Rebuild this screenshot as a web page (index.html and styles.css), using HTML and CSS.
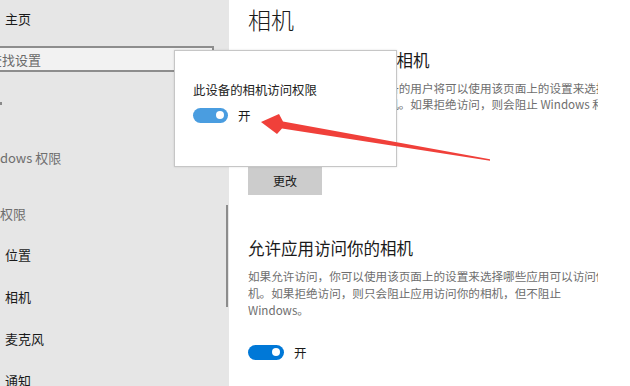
FILE: index.html
```html
<!DOCTYPE html>
<html lang="zh-CN">
<head>
    <meta charset="UTF-8">
    <title>相机</title>
    <link rel="stylesheet" href="styles.css">
</head>
<body>
    <div class="sidebar">
        <div class="home">主页</div>
        <div class="search"><span class="search-text">查找设置</span></div>
        <div class="nav-item"><span class="mark"></span></div>
        <div class="nav-head"><span class="cut-win">Windows 权限</span></div>
        <div class="nav-head app-head"><span class="cut-app">应用权限</span></div>
        <div class="nav-item">位置</div>
        <div class="nav-item">相机</div>
        <div class="nav-item">麦克风</div>
        <div class="nav-item">通知</div>
        <div class="thumb"></div>
    </div>

    <div class="main">
        <h1>相机</h1>
        <h2 class="first">允许访问此设备上的相机</h2>
        <p class="desc">如果允许访问，则使用此设备的用户将可以使用该页面上的设置来选择是否允许应用访问你的相机<br>择哪些应用可以访问你的相机。如果拒绝访问，则会阻止 Windows 和应用访问你的相机。</p>
        <p class="status">此设备的相机访问已开启</p>
        <button class="change">更改</button>

        <h2 class="second">允许应用访问你的相机</h2>
        <p class="desc desc2">如果允许访问，你可以使用该页面上的设置来选择哪些应用可以访问你的相<br>机。如果拒绝访问，则只会阻止应用访问你的相机，但不阻止<br>Windows。</p>
        <div class="toggle-row">
            <span class="toggle"><span class="knob"></span></span>
            <span class="on">开</span>
        </div>
    </div>

    <div class="popup">
        <div class="popup-title">此设备的相机访问权限</div>
        <div class="toggle-row popup-row">
            <span class="toggle light"><span class="knob"></span></span>
            <span class="on">开</span>
        </div>
    </div>

    <svg class="arrow" width="630" height="386" viewBox="0 0 630 386">
        <polygon points="261,122 279,114 283,121.5 490,159.3 490,160.7 282,128.5 277,134" fill="#f0403a"/>
    </svg>
</body>
</html>
```

FILE: styles.css
```css
body{
    margin: 0;
    width: 630px;
    height: 386px;
    overflow: hidden;
    display: flex;
    position: relative;
    font-family: "Noto Sans CJK SC", "Noto Sans", sans-serif;
    color: #1a1a1a;
}
.sidebar{
    width: 229px;
    flex-shrink: 0;
    background-color: #e6e6e6;
    position: relative;
    overflow: hidden;
}
.home{
    height: 38px;
    line-height: 38px;
    padding-left: 5px;
    font-size: 13px;
}
.search{
    margin-top: 8px;
    margin-left: -20px;
    width: 223px;
    height: 22px;
    border: 2px solid #8d8d8d;
    background-color: #f2f2f2;
    display: flex;
    align-items: center;
    padding-left: 7px;
    font-size: 13px;
    color: #6a6a6a;
}
.nav-item{
    height: 42px;
    display: flex;
    align-items: center;
    padding-left: 5px;
    font-size: 13px;
}
.nav-item:nth-child(3){
    margin-top: 10px;
    padding-left: 0;
}
.mark{
    width: 2px;
    height: 3px;
    background-color: #8a8a8a;
}
.nav-head{
    height: 42px;
    margin-top: 12px;
    display: flex;
    align-items: center;
    font-size: 13px;
    color: #6e6e6e;
    white-space: nowrap;
}
.app-head{
    height: 40px;
    margin-top: 15px;
}
.cut-win{
    margin-left: -23px;
}
.cut-app{
    margin-left: -26px;
}
.thumb{
    position: absolute;
    left: 226px;
    top: 205px;
    width: 2px;
    height: 102px;
    background-color: #8c8c8c;
}
.main{
    flex: 1;
    background-color: #fff;
    padding-left: 19px;
    padding-top: 4px;
}
.main > *{
    width: 350px;
    overflow: hidden;
    white-space: nowrap;
}
h1{
    margin: 0;
    font-size: 23px;
    line-height: 30px;
    font-weight: 300;
}
h2{
    margin: 0;
    font-size: 16.5px;
    line-height: 24px;
    font-weight: 400;
}
h2.first{
    margin-top: 14px;
}
h2.second{
    margin-top: 41px;
}
.desc{
    margin: 8px 0 0 0;
    font-size: 11.6px;
    line-height: 16px;
    color: #6e6e6e;
}
.desc2{
    line-height: 17px;
}
.status{
    margin: 30px 0 0 0;
    font-size: 11.6px;
    line-height: 16px;
    color: #1a1a1a;
}
.change{
    display: block;
    margin-top: 7px;
    width: 74px;
    height: 30px;
    border: none;
    background-color: #cccccc;
    font-family: "Noto Sans CJK SC", sans-serif;
    font-size: 12px;
    color: #1a1a1a;
    padding: 0;
}
.toggle-row{
    margin-top: 25px;
    display: flex;
    align-items: center;
    gap: 10px;
    height: 16px;
}
.toggle{
    width: 36px;
    height: 15px;
    border-radius: 8px;
    background-color: #0078d7;
    display: flex;
    align-items: center;
    justify-content: flex-end;
    padding-right: 4px;
    box-sizing: border-box;
}
.knob{
    width: 8px;
    height: 8px;
    border-radius: 50%;
    background-color: #fff;
}
.on{
    font-size: 12.5px;
    color: #1a1a1a;
}
.popup{
    position: absolute;
    left: 174px;
    top: 50px;
    width: 203px;
    height: 115px;
    background-color: #fff;
    border: 1px solid #c6c6c6;
    box-shadow: 0 0 2px rgba(0,0,0,0.12);
    padding-left: 18px;
}
.popup-title{
    margin-top: 31px;
    font-size: 12.4px;
    line-height: 16px;
    color: #222;
}
.popup-row{
    margin-top: 9px;
}
.toggle.light{
    width: 35px;
    background-color: #4a9de0;
}
.arrow{
    position: absolute;
    left: 0;
    top: 0;
}
```
